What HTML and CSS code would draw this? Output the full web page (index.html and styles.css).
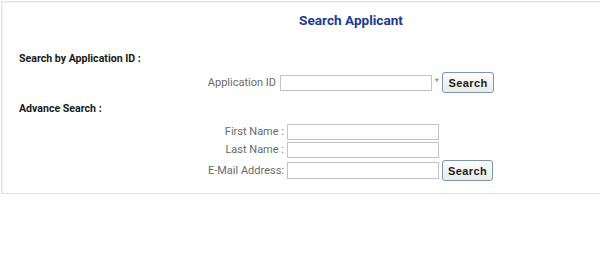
FILE: index.html
```html
<!DOCTYPE html>
<html>
<head>
<meta charset="utf-8">
<link rel="stylesheet" href="styles.css">
</head>
<body>
<div class="panel">
  <h1 class="title">Search Applicant</h1>
  <div class="section-head">Search by Application ID :</div>
  <div class="row row-id">
    <label class="lbl lbl-id">Application ID</label>
    <input class="field" type="text">
    <span class="req">*</span>
    <button class="btn">Search</button>
  </div>
  <div class="section-head adv">Advance Search :</div>
  <div class="row row-first">
    <label class="lbl lbl-adv">First Name :</label>
    <input class="field" type="text">
  </div>
  <div class="row row-last">
    <label class="lbl lbl-adv">Last Name :</label>
    <input class="field" type="text">
  </div>
  <div class="row row-mail">
    <label class="lbl lbl-adv">E-Mail Address:</label>
    <input class="field field-mail" type="text">
    <button class="btn btn-mail">Search</button>
  </div>
</div>
</body>
</html>
```
FILE: styles.css
```css
html, body {
  margin: 0;
  padding: 0;
  background: #fff;
  overflow: hidden;
}
body {
  font-family: Roboto, "Liberation Sans", Arial, sans-serif;
  color: #222;
}
.panel {
  margin: 1px 0 0 1px;
  width: 700px;
  height: 191px;
  border: 1px solid #e2e2e2;
  box-shadow: inset 1px 1px 0 #f2f2f2;
  padding: 0 0 0 17px;
  box-sizing: content-box;
}
.title {
  margin: 0 19px 0 -17px;
  padding: 9px 0 0 0;
  height: 33px;
  box-sizing: border-box;
  text-align: center;
  font-size: 13.6px;
  font-weight: 700;
  color: #1b3a92;
  line-height: 18px;
}
.section-head {
  font-size: 10.6px;
  font-weight: 700;
  color: #1a1a1a;
  line-height: 16px;
  height: 16px;
  margin-top: 16px;
}
.section-head.adv {
  margin-top: 8px;
}
.row {
  display: flex;
  align-items: center;
}
.row-id {
  margin-top: 5px;
  height: 21px;
}
.row-first {
  margin-top: 7px;
  height: 16px;
}
.row-last {
  margin-top: 2px;
  height: 16px;
}
.row-mail {
  margin-top: 2px;
  height: 21px;
}
.lbl {
  font-size: 11px;
  color: #6a6a6a;
  text-align: right;
  line-height: 16px;
}
.lbl-id {
  width: 257px;
  margin-right: 4px;
}
.lbl-adv {
  width: 265px;
  margin-right: 3px;
}
.field {
  width: 152px;
  height: 16px;
  box-sizing: border-box;
  border: 1px solid #c4c4c4;
  background: #fff;
  margin: 0;
  padding: 0 2px;
  font-size: 11px;
}
.field-mail {
  height: 17px;
}
.req {
  color: #e05050;
  font-size: 9px;
  width: 10px;
  text-align: center;
  line-height: 10px;
  margin-top: -2px;
}
.btn {
  width: 52px;
  height: 21px;
  box-sizing: border-box;
  border: 1px solid #7a95b5;
  border-radius: 3px;
  background: linear-gradient(#fdfdfc, #ecebe6);
  font-family: "Liberation Sans", Arial, sans-serif;
  font-weight: 700;
  font-size: 11px;
  letter-spacing: 0.4px;
  color: #1a1a1a;
  padding: 0;
  margin: 0;
}
.btn-mail {
  margin-left: 3px;
  width: 51px;
}
```
